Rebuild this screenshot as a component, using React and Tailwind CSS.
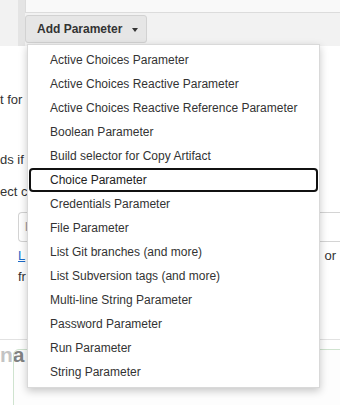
import React from 'react';

const items = [
  'Active Choices Parameter',
  'Active Choices Reactive Parameter',
  'Active Choices Reactive Reference Parameter',
  'Boolean Parameter',
  'Build selector for Copy Artifact',
  'Choice Parameter',
  'Credentials Parameter',
  'File Parameter',
  'List Git branches (and more)',
  'List Subversion tags (and more)',
  'Multi-line String Parameter',
  'Password Parameter',
  'Run Parameter',
  'String Parameter',
];

const App = () => {
  const focused = 'Choice Parameter';

  return (
    <div className="relative w-[340px] h-[405px] overflow-hidden bg-white text-[#333] font-['Liberation_Sans',Arial,sans-serif]">
      {/* top strip with the repeatable container and button */}
      <div className="flex h-[46px] bg-[#f2f2f2]">
        <div className="w-[18px]" />
        <div className="w-[7px] bg-[#e4e4e4]" />
        <div className="flex-1 flex flex-col">
          <div className="h-[13px] bg-[#f9f9f9] border-b border-l border-[#dcdcdc]" />
          <div className="pt-[2px]">
            <button className="flex items-center h-[28px] w-[122px] pl-[11px] bg-[#e6e6e6] border border-[#d2d2d2] rounded-[3px] text-[12px] font-bold text-[#333]">
              Add Parameter
              <span className="ml-[10px] mt-[1px] w-0 h-0 border-l-[3px] border-r-[3px] border-t-[4px] border-l-transparent border-r-transparent border-t-[#333]" />
            </button>
          </div>
        </div>
      </div>

      {/* page content behind the menu, clipped where the menu starts */}
      <div className="text-[13px] whitespace-nowrap">
        <div className="h-[42px]" />
        <div className="w-[27px] overflow-hidden leading-[24px] h-[24px]">t for</div>
        <div className="h-[36px]" />
        <div className="w-[27px] overflow-hidden leading-[24px] h-[24px]">ds if</div>
        <div className="h-[8px]" />
        <div className="w-[27px] overflow-hidden leading-[24px] h-[24px]">ect c</div>
        <div className="h-[8px]" />
        <div className="ml-[18px] h-[30px] border border-[#d4d4d4] rounded-l-[4px] border-r-0 flex items-center pl-[6px] text-[#999]">
          l
        </div>
        <div className="flex justify-between pl-[18px] pr-[4px] pt-[3px] leading-[21px]">
          <span className="text-[#1b6ac9] underline">L</span>
          <span>or</span>
        </div>
        <div className="w-[27px] overflow-hidden pl-[18px] leading-[21px]">fr</div>
        <div className="h-[53px] border-b border-[#e2e2e2]" />
        <div className="flex pt-[3px] text-[21px] font-bold leading-[24px]">
          <span className="text-[#c4c4c4]">n</span>
          <span className="text-[#333]">a</span>
        </div>
      </div>

      {/* green bordered box under heading */}
      <div className="absolute left-[13px] top-[349px] w-[340px] h-[80px] rounded-[6px] border border-[#cfe3cf] bg-[#fbfbfb]/40" />

      {/* dropdown menu */}
      <div className="absolute left-[27px] top-[44px] w-[293px] bg-white border border-[#d9d9d9] py-[3px] shadow-[0_3px_8px_rgba(0,0,0,0.22)]">
        {items.map((label) => (
          <div
            key={label}
            className={
              label === focused
                ? 'mx-[1px] h-[24px] flex items-center pl-[21px] text-[12px] text-[#222] rounded-[4px] shadow-[inset_0_0_0_2px_#111]'
                : 'mx-[1px] h-[24px] flex items-center pl-[21px] text-[12px] text-[#333]'
            }
          >
            {label}
          </div>
        ))}
      </div>
    </div>
  );
};

export default App;
